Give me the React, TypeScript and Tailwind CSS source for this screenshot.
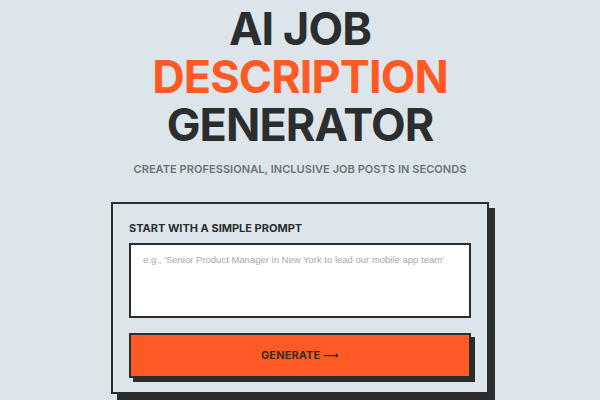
import React from "react";

export default function App() {
  return (
    <div
      className="w-[600px] h-[400px] overflow-hidden bg-[#dce5e9] flex flex-col items-center"
      style={{ fontFamily: "Inter, 'Liberation Sans', sans-serif" }}
    >
      <h1 className="mt-[5px] text-center text-[45px] leading-[48px] font-bold tracking-[-0.02em] text-[#2b2d2f]">
        <span className="block">AI JOB</span>
        <span className="block text-[#ff5a26]">DESCRIPTION</span>
        <span className="block">GENERATOR</span>
      </h1>
      <p className="mt-[13px] text-[11px] leading-[14px] font-semibold tracking-[0.005em] text-[#6b7378]">
        CREATE PROFESSIONAL, INCLUSIVE JOB POSTS IN SECONDS
      </p>
      <div className="mt-[26px] w-[378px] border-2 border-[#2b2d2f] bg-[#dce5e9] shadow-[6px_6px_0_#2b2d2f] px-[16px] pt-[17px] pb-[14px]">
        <label className="block text-[11px] leading-[14px] font-bold text-[#2b2d2f]">
          START WITH A SIMPLE PROMPT
        </label>
        <textarea
          className="mt-[8px] block w-full h-[75px] resize-none border-2 border-[#2b2d2f] bg-white px-[12px] py-[8px] text-[9.5px] leading-[13px] text-[#2b2d2f] placeholder:text-[#a3a8ad] outline-none"
          style={{ fontFamily: "'Liberation Sans', Arial, sans-serif" }}
          placeholder="e.g., 'Senior Product Manager in New York to lead our mobile app team'"
        />
        <button className="mt-[15px] w-full h-[45px] border-2 border-[#2b2d2f] bg-[#ff5a26] shadow-[4px_4px_0_#2b2d2f] text-[11px] font-bold text-[#3a2a22] tracking-[0.01em]">
          GENERATE <span style={{ fontFamily: "'DejaVu Sans', sans-serif" }}>⟶</span>
        </button>
      </div>
    </div>
  );
}
